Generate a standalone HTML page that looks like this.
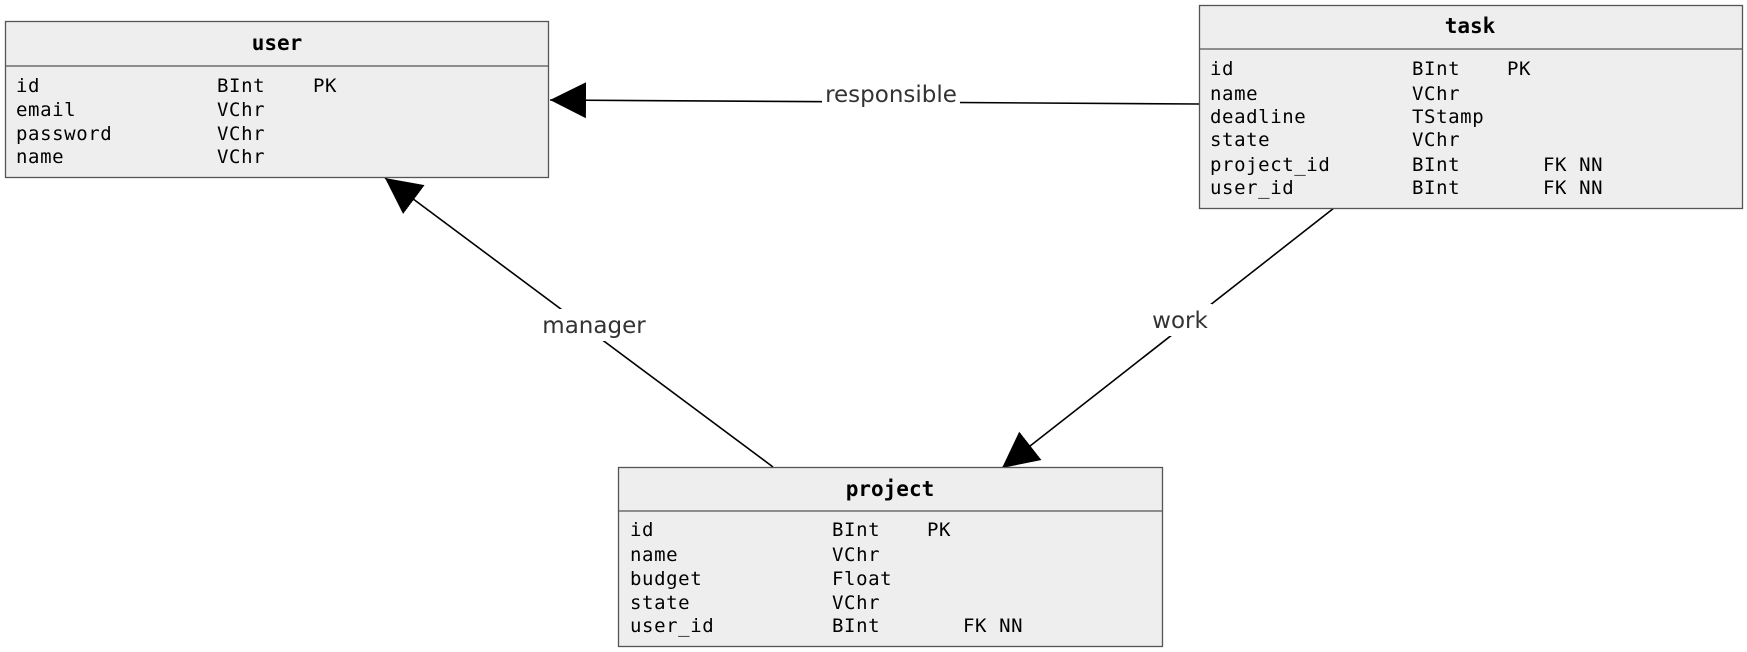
<!DOCTYPE html>
<html><head><meta charset="utf-8"><style>
html,body{margin:0;padding:0;background:#fff;width:1747px;height:652px;overflow:hidden}
</style></head><body>
<svg width="1747" height="652" xmlns="http://www.w3.org/2000/svg">
<defs>
<marker id="a" markerUnits="userSpaceOnUse" markerWidth="40" markerHeight="40" refX="36" refY="18" orient="auto">
<path d="M0,0 L36,18 L0,36 Z" fill="#000"/>
</marker>
</defs>
<g stroke="#000" stroke-width="1.6" fill="none">
<line x1="1199" y1="104" x2="550" y2="100" marker-end="url(#a)"/>
<line x1="773" y1="467" x2="385" y2="178" marker-end="url(#a)"/>
<line x1="1334" y1="208" x2="1002" y2="468" marker-end="url(#a)"/>
</g>
<g font-family="'DejaVu Sans','Liberation Sans',sans-serif" font-size="23" fill="#333" text-anchor="middle">
<rect x="822" y="80" width="138" height="30" fill="#fff"/>
<text x="891" y="102">responsible</text>
<rect x="540" y="309" width="108" height="32" fill="#fff"/>
<text x="594" y="333">manager</text>
<rect x="1148" y="304" width="64" height="32" fill="#fff"/>
<text x="1180" y="328">work</text>
</g>
<g font-family="'DejaVu Sans Mono','Liberation Mono',monospace" fill="#000">
<!-- user -->
<rect x="5.5" y="21.5" width="543" height="156" fill="#eee" stroke="#555" stroke-width="1.3"/>
<line x1="5.5" y1="66" x2="548.5" y2="66" stroke="#555" stroke-width="1.3"/>
<text x="277" y="50" font-size="21" font-weight="bold" text-anchor="middle">user</text>
<g font-size="19" letter-spacing="0.6">
<text x="16" y="92">id</text><text x="217" y="92">BInt</text><text x="313" y="92">PK</text>
<text x="16" y="116">email</text><text x="217" y="116">VChr</text>
<text x="16" y="140">password</text><text x="217" y="140">VChr</text>
<text x="16" y="163">name</text><text x="217" y="163">VChr</text>
</g>
<!-- task -->
<rect x="1199.5" y="5.5" width="543" height="203" fill="#eee" stroke="#555" stroke-width="1.3"/>
<line x1="1199.5" y1="49" x2="1742.5" y2="49" stroke="#555" stroke-width="1.3"/>
<text x="1470" y="33" font-size="21" font-weight="bold" text-anchor="middle">task</text>
<g font-size="19" letter-spacing="0.6">
<text x="1210" y="75">id</text><text x="1412" y="75">BInt</text><text x="1507" y="75">PK</text>
<text x="1210" y="100">name</text><text x="1412" y="100">VChr</text>
<text x="1210" y="123">deadline</text><text x="1412" y="123">TStamp</text>
<text x="1210" y="146">state</text><text x="1412" y="146">VChr</text>
<text x="1210" y="171">project_id</text><text x="1412" y="171">BInt</text><text x="1543" y="171">FK NN</text>
<text x="1210" y="194">user_id</text><text x="1412" y="194">BInt</text><text x="1543" y="194">FK NN</text>
</g>
<!-- project -->
<rect x="618.5" y="467.5" width="544" height="179" fill="#eee" stroke="#555" stroke-width="1.3"/>
<line x1="618.5" y1="511" x2="1162.5" y2="511" stroke="#555" stroke-width="1.3"/>
<text x="890" y="496" font-size="21" font-weight="bold" text-anchor="middle">project</text>
<g font-size="19" letter-spacing="0.6">
<text x="630" y="536">id</text><text x="832" y="536">BInt</text><text x="927" y="536">PK</text>
<text x="630" y="561">name</text><text x="832" y="561">VChr</text>
<text x="630" y="585">budget</text><text x="832" y="585">Float</text>
<text x="630" y="609">state</text><text x="832" y="609">VChr</text>
<text x="630" y="632">user_id</text><text x="832" y="632">BInt</text><text x="963" y="632">FK NN</text>
</g>
</g>
</svg>
</body></html>
